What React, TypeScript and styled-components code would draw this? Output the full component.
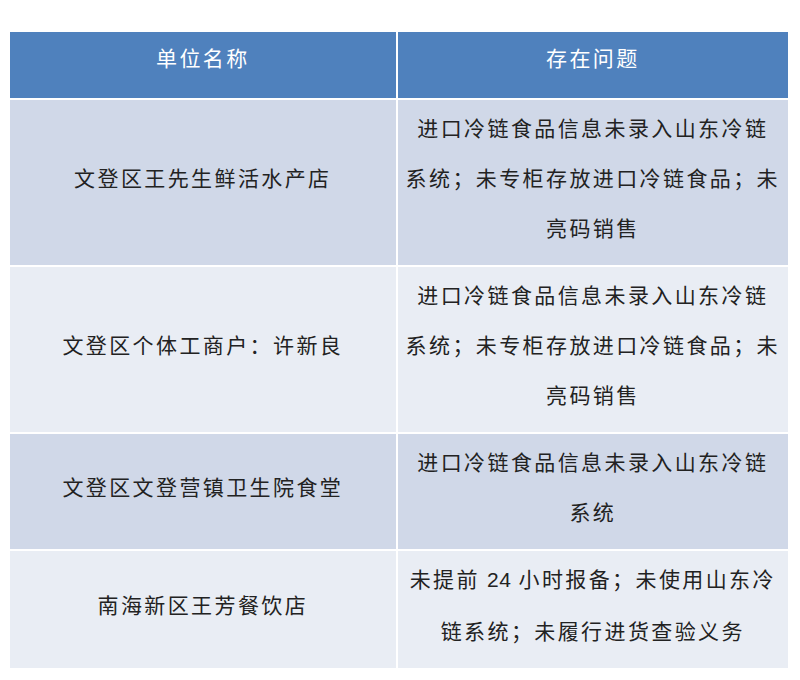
import React from 'react';
import styled, { createGlobalStyle } from 'styled-components';

type Row = {
  name: string;
  issue: React.ReactNode[];
};

const GlobalStyle = createGlobalStyle`
  body {
    margin: 0;
    background: #fff;
    font-family: 'Noto Sans CJK SC', 'Noto Sans', sans-serif;
  }
`;

const Page = styled.div`
  width: 800px;
  height: 680px;
  padding: 32px 0 0 10px;
  box-sizing: border-box;
`;

const Table = styled.div`
  width: 778px;
  display: grid;
  grid-template-columns: 1fr 1fr;
  gap: 2px;
  background: #fff;
`;

const HeadCell = styled.div`
  height: 66px;
  box-sizing: border-box;
  padding-bottom: 16px;
  display: flex;
  align-items: center;
  justify-content: center;
  background: #4f81bd;
  color: #fff;
  font-size: 21px;
  letter-spacing: 2.4px;
`;

const Cell = styled.div<{ $odd: boolean }>`
  display: flex;
  align-items: center;
  justify-content: center;
  padding: 2px 8px 13px;
  background: ${props => (props.$odd ? '#d0d8e8' : '#e9edf4')};
  color: #222;
  font-size: 21px;
  letter-spacing: 2.4px;
`;

const Lines = styled.div`
  display: flex;
  flex-direction: column;
  align-items: center;
`;

const Line = styled.div`
  line-height: 50px;
  white-space: nowrap;
`;

const Num = styled.span`
  font-family: 'Liberation Sans', sans-serif;
  letter-spacing: 0.5px;
`;

const rows: Row[] = [
  {
    name: '文登区王先生鲜活水产店',
    issue: ['进口冷链食品信息未录入山东冷链', '系统；未专柜存放进口冷链食品；未', '亮码销售'],
  },
  {
    name: '文登区个体工商户：许新良',
    issue: ['进口冷链食品信息未录入山东冷链', '系统；未专柜存放进口冷链食品；未', '亮码销售'],
  },
  {
    name: '文登区文登营镇卫生院食堂',
    issue: ['进口冷链食品信息未录入山东冷链', '系统'],
  },
  {
    name: '南海新区王芳餐饮店',
    issue: [
      <>
        未提前 <Num>24</Num> 小时报备；未使用山东冷
      </>,
      '链系统；未履行进货查验义务',
    ],
  },
];

function App() {
  return (
    <>
      <GlobalStyle />
      <Page>
        <Table>
          <HeadCell>单位名称</HeadCell>
          <HeadCell>存在问题</HeadCell>
          {rows.map((row, index) => (
            <React.Fragment key={index}>
              <Cell $odd={index % 2 === 0}>
                <Line>{row.name}</Line>
              </Cell>
              <Cell $odd={index % 2 === 0}>
                <Lines>
                  {row.issue.map((line, i) => (
                    <Line key={i}>{line}</Line>
                  ))}
                </Lines>
              </Cell>
            </React.Fragment>
          ))}
        </Table>
      </Page>
    </>
  );
}
export default App;
